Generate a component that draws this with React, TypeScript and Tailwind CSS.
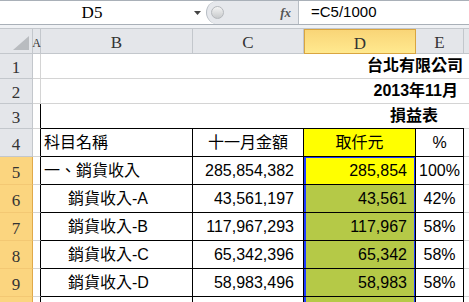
import React from "react"

const sans = "font-['Liberation_Sans','Noto_Sans_CJK_TC',sans-serif]"
const serif = "font-['Liberation_Serif','DejaVu_Serif',serif]"

type Row = { label: string; indent?: boolean; amount: string; k: string; pct: string; head?: boolean }

const rows: Row[] = [
  { label: "科目名稱", amount: "十一月金額", k: "取仟元", pct: "%", head: true },
  { label: "一、銷貨收入", amount: "285,854,382", k: "285,854", pct: "100%" },
  { label: "銷貨收入-A", indent: true, amount: "43,561,197", k: "43,561", pct: "42%" },
  { label: "銷貨收入-B", indent: true, amount: "117,967,293", k: "117,967", pct: "58%" },
  { label: "銷貨收入-C", indent: true, amount: "65,342,396", k: "65,342", pct: "58%" },
  { label: "銷貨收入-D", indent: true, amount: "58,983,496", k: "58,983", pct: "58%" },
]

function RowHead({ n, active, h }: { n?: number; active?: boolean; h: string }) {
  return (
    <div
      className={`${h} w-[33px] shrink-0 flex items-center justify-center pt-1 border-r border-b text-[17px] ${serif} ${
        active ? "bg-[#fbd57f] border-r-[#e0a94a] border-b-[#f3c873] text-[#333]" : "bg-[#e4e6ea] border-[#c3c7cc] text-[#333]"
      }`}
    >
      {n}
    </div>
  )
}

function TitleRow({ n, text, pr, last }: { n: number; text: string; pr: string; last?: boolean }) {
  return (
    <div className="flex h-[25px]">
      <RowHead n={n} h="h-[25px]" />
      <div className={`w-[8px] shrink-0 border-r border-b border-[#d4d4d4] ${last ? "border-r-black" : ""}`} />
      <div
        className={`w-[423px] shrink-0 border-b flex items-center justify-end font-bold text-[16px] text-black ${sans} ${pr} ${
          last ? "border-black" : "border-[#d4d4d4]"
        }`}
      >
        {text}
      </div>
      <div className="flex-1 border-b border-[#d4d4d4]" />
    </div>
  )
}

function DataRow({ r, n }: { r: Row; n?: number }) {
  const first = n === 5
  const dBg = r.head ? "bg-[#ffff00]" : first ? "bg-[#ffff00]" : "bg-[#b5c947]"
  const sel = r.head
    ? ""
    : first
    ? "shadow-[inset_2px_0_0_#1e3cff,inset_-1px_0_0_#1e3cff,inset_0_1px_0_#1e3cff]"
    : "shadow-[inset_2px_0_0_#1e3cff,inset_-1px_0_0_#1e3cff]"
  return (
    <div className={`flex h-[28px] text-[16px] text-black ${sans}`}>
      <RowHead n={n} active={!r.head} h="h-[28px]" />
      <div className="w-[8px] shrink-0 border-r border-b border-[#d4d4d4] border-r-black" />
      <div className={`w-[152px] shrink-0 border-r border-b border-black flex items-center ${r.indent ? "pl-[27px]" : "pl-[3px]"}`}>
        {r.label}
      </div>
      <div className={`w-[111px] shrink-0 border-r border-b border-black flex items-center ${r.head ? "justify-center" : "justify-end pr-[9px]"}`}>
        {r.amount}
      </div>
      <div className={`w-[112px] shrink-0 border-r border-b border-black flex items-center ${dBg} ${sel} ${r.head ? "justify-center" : "justify-end pr-[8px]"}`}>
        {r.k}
      </div>
      <div className="w-[48px] shrink-0 border-r border-b border-black flex items-center justify-center">{r.pct}</div>
      <div className="flex-1 border-b border-[#d4d4d4]" />
    </div>
  )
}

export default function App() {
  return (
    <div className="w-[469px] h-[302px] overflow-hidden bg-white">
      {/* formula bar */}
      <div className="flex h-[25px] border-t border-b border-[#a9b0b8] bg-white">
        <div className="w-[206px] shrink-0 relative flex items-center">
          <span className={`w-full text-center pr-[22px] text-[17px] text-black ${serif}`}>D5</span>
          <svg className="absolute left-[194px] top-[10px]" width="7" height="4" viewBox="0 0 7 4">
            <path d="M0 0h7L3.5 4z" fill="#444" />
          </svg>
        </div>
        <div className="w-[93px] shrink-0 bg-[#e6e8ec] border-l border-r border-[#b7bdc4] rounded-l-[12px] flex items-center">
          <div className="ml-[4px] w-[13px] h-[13px] rounded-full bg-gradient-to-b from-[#f4f4f4] to-[#c8cacc] border border-[#b5b8bc]" />
          <span className={`ml-auto mr-[7px] italic font-bold text-[13px] text-[#555] ${serif}`}>fx</span>
        </div>
        <div className={`flex-1 flex items-center pl-[12px] text-[15px] text-black ${sans}`}>=C5/1000</div>
      </div>
      <div className="h-[3px] bg-[#f0f2f5]" />

      {/* column headers */}
      <div className={`flex h-[26px] border-t border-[#c3c7cc] text-[17px] text-[#333] ${serif}`}>
        <div className="w-[33px] shrink-0 bg-[#e4e6ea] border-r border-b border-[#c3c7cc] flex items-end justify-end p-[3px]">
          <svg width="16" height="14" viewBox="0 0 16 14">
            <path d="M16 0V14H0z" fill="#b9bcc0" />
          </svg>
        </div>
        <div className="w-[8px] shrink-0 bg-[#e4e6ea] border-r border-b border-[#c3c7cc] flex items-center justify-center pt-1 text-[12px] leading-none">A</div>
        <div className="w-[152px] shrink-0 bg-[#e4e6ea] border-r border-b border-[#c3c7cc] flex items-center justify-center pt-1">B</div>
        <div className="w-[111px] shrink-0 bg-[#e4e6ea] border-r border-b border-[#c3c7cc] flex items-center justify-center pt-1">C</div>
        <div className="w-[112px] shrink-0 bg-gradient-to-b from-[#f9d577] to-[#ffe98f] border border-[#d9a540] flex items-center justify-center pt-1">D</div>
        <div className="w-[48px] shrink-0 bg-[#e4e6ea] border-r border-b border-[#c3c7cc] flex items-center justify-center pt-1">E</div>
        <div className="flex-1 bg-[#e4e6ea] border-b border-[#c3c7cc]" />
      </div>

      <TitleRow n={1} text="台北有限公司" pr="pr-[1px]" />
      <TitleRow n={2} text="2013年11月" pr="pr-[6px]" />
      <TitleRow n={3} text="損益表" pr="pr-[26px]" last />
      {rows.map((r, i) => (
        <DataRow key={i} r={r} n={i + 4} />
      ))}
      <DataRow r={{ label: "", amount: "", k: "", pct: "" }} />
    </div>
  )
}
